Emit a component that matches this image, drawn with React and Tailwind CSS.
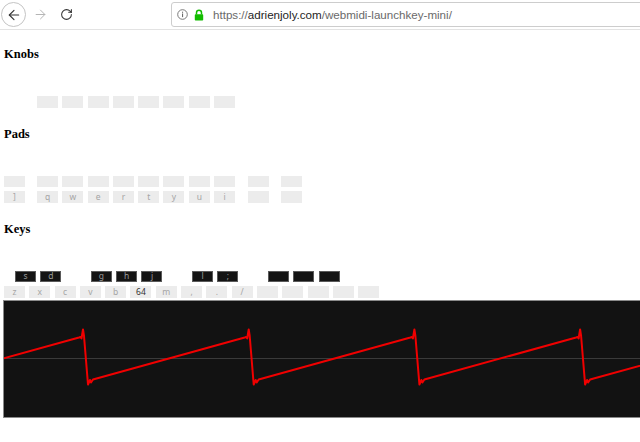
import { ArrowLeft, ArrowRight, RotateCw } from 'lucide-react';

const serif = { fontFamily: '"Liberation Serif", serif' };

function Key({ label, dark, strong, hidden }) {
  // petite case grise, ou touche noire
  const base = dark
    ? 'bg-[#141414] border border-[#5a5a5a] text-[#9a9a9a]'
    : 'bg-[#ececec] ' + (strong ? 'text-[#333]' : 'text-[#a5a5a5]');
  return (
    <div
      className={`w-[21px] shrink-0 flex items-center justify-center text-[8.5px] leading-none ${base} ${hidden ? 'invisible' : ''}`}
    >
      {label}
    </div>
  );
}

function Heading({ children, className }) {
  return (
    <div
      className={`font-bold text-[12.5px] leading-[14px] text-black pl-[3px] ${className}`}
      style={serif}
    >
      {children}
    </div>
  );
}

function wavePoints() {
  const period = 165.7;
  const pts = [];
  for (let k = -1; k < 5; k++) {
    const p = 83 + period * k;
    pts.push([p - 4, 337.5], [p - 2.5, 337], [p - 1.5, 338.5], [p, 329.5], [p + 1, 336]);
    pts.push([p + 5, 384.5], [p + 7, 380], [p + 8, 382.5], [p + 10, 379.5]);
  }
  // offset to canvas inner coords
  return pts.map(([x, y]) => `${(x - 4).toFixed(1)},${(y - 301).toFixed(1)}`).join(' ');
}

function Scope() {
  return (
    <div className="mt-[2px] ml-[3px] w-[660px] h-[118px] border border-[#8a8a8a] bg-[#121212] relative overflow-hidden">
      <svg width="660" height="116" className="block">
        <line x1="0" y1="57.5" x2="660" y2="57.5" stroke="#3a3a3a" strokeWidth="1" />
        <polyline points={wavePoints()} fill="none" stroke="#f00000" strokeWidth="2" strokeLinejoin="round" />
      </svg>
    </div>
  );
}

export default function App() {
  const padLabels = ['q', 'w', 'e', 'r', 't', 'y', 'u', 'i'];
  const whiteKeys = ['z', 'x', 'c', 'v', 'b', '64', 'm', ',', '.', '/', '', '', '', '', ''];
  const blackKeys = ['s', 'd', null, 'g', 'h', 'j', null, 'l', ';', null, '', '', ''];

  return (
    <div className="w-[640px] h-[442px] overflow-hidden bg-white">
      {/* barre du navigateur */}
      <div
        className="h-[30px] border-b border-[#e3e3e3] flex items-center"
        style={{ fontFamily: '"Liberation Sans", Arial, sans-serif' }}
      >
        <div className="ml-[1px] w-[25px] h-[25px] rounded-full border border-[#c4c4c4] flex items-center justify-center">
          <ArrowLeft size={16} strokeWidth={1.7} className="text-[#333]" />
        </div>
        <ArrowRight size={15} strokeWidth={1.6} className="ml-[7px] text-[#b5b5b5]" />
        <RotateCw size={13} strokeWidth={1.9} className="ml-[12px] text-[#333]" />
        <div className="ml-[98px] h-[25px] flex-1 -mr-[10px] border border-[#cdcdcd] rounded-[3px] flex items-center">
          <svg width="11" height="11" viewBox="0 0 11 11" className="ml-[5px]">
            <circle cx="5.5" cy="5.5" r="4.8" fill="none" stroke="#6b6b6b" strokeWidth="0.9" />
            <rect x="5" y="4.5" width="1.1" height="3.6" fill="#6b6b6b" />
            <rect x="5" y="2.7" width="1.1" height="1.1" fill="#6b6b6b" />
          </svg>
          <svg width="10" height="12" viewBox="0 0 10 12" className="ml-[6px]">
            <path d="M2.5 5.5V3.8a2.5 2.5 0 0 1 5 0v1.7" fill="none" stroke="#12bc00" strokeWidth="1.5" />
            <rect x="0.8" y="5.3" width="8.4" height="6.2" rx="0.8" fill="#12bc00" />
          </svg>
          <span className="ml-[9px] text-[11.6px] text-[#6a6a6a] whitespace-nowrap">
            https://<span className="text-[#1e1e1e]">adrienjoly.com</span>/webmidi-launchkey-mini/
          </span>
        </div>
      </div>

      {/* contenu de la page */}
      <div className="px-[1px]">
        <Heading className="mt-[17px]">Knobs</Heading>
        <div className="mt-[35px] h-[12px] flex gap-[4.3px] pl-[36px]">
          {padLabels.map((_, i) => (
            <Key key={i} label="" />
          ))}
        </div>

        <Heading className="mt-[19px]">Pads</Heading>
        <div className="mt-[35px] h-[11px] flex pl-[3px]">
          <Key label="" />
          <div className="ml-[12px] flex gap-[4.3px]">
            {padLabels.map((l) => (
              <Key key={l} label="" />
            ))}
          </div>
          <div className="ml-[13px] flex"><Key label="" /></div>
          <div className="ml-[12px] flex"><Key label="" /></div>
        </div>
        <div className="mt-[4px] h-[12px] flex pl-[3px]">
          <Key label="]" />
          <div className="ml-[12px] flex gap-[4.3px]">
            {padLabels.map((l) => (
              <Key key={l} label={l} />
            ))}
          </div>
          <div className="ml-[13px] flex"><Key label="" /></div>
          <div className="ml-[12px] flex"><Key label="" /></div>
        </div>

        <Heading className="mt-[19px]">Keys</Heading>
        <div className="mt-[35px] h-[11px] flex gap-[4.3px] pl-[14px]">
          {blackKeys.map((l, i) => (
            <Key key={i} dark label={l || ''} hidden={l === null} />
          ))}
        </div>
        <div className="mt-[4px] h-[12px] flex gap-[4.3px] pl-[3px]">
          {whiteKeys.map((l, i) => (
            <Key key={i} label={l} strong={l === '64'} />
          ))}
        </div>
      </div>

      <Scope />
    </div>
  );
}
